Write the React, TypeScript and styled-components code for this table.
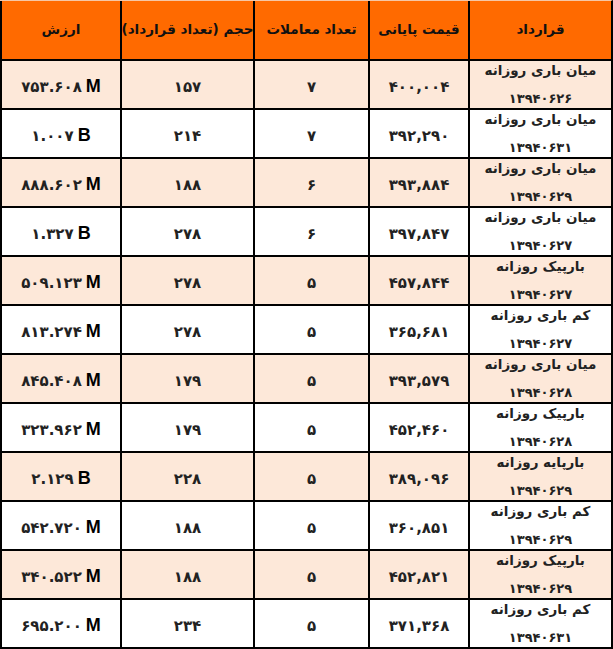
import React from "react";
import styled, { createGlobalStyle } from "styled-components";

type Row = {
  name: string;
  date: string;
  price: string;
  trades: string;
  volume: string;
  value: string;
  unit: "M" | "B";
};

const rows: Row[] = [
  { name: "میان باری روزانه", date: "۱۳۹۴۰۶۲۶", price: "۴۰۰,۰۰۴", trades: "۷", volume: "۱۵۷", value: "۷۵۳.۶۰۸", unit: "M" },
  { name: "میان باری روزانه", date: "۱۳۹۴۰۶۳۱", price: "۳۹۲,۲۹۰", trades: "۷", volume: "۲۱۴", value: "۱.۰۰۷", unit: "B" },
  { name: "میان باری روزانه", date: "۱۳۹۴۰۶۲۹", price: "۳۹۳,۸۸۴", trades: "۶", volume: "۱۸۸", value: "۸۸۸.۶۰۲", unit: "M" },
  { name: "میان باری روزانه", date: "۱۳۹۴۰۶۲۷", price: "۳۹۷,۸۴۷", trades: "۶", volume: "۲۷۸", value: "۱.۳۲۷", unit: "B" },
  { name: "بارپیک روزانه", date: "۱۳۹۴۰۶۲۷", price: "۴۵۷,۸۴۴", trades: "۵", volume: "۲۷۸", value: "۵۰۹.۱۲۳", unit: "M" },
  { name: "کم باری روزانه", date: "۱۳۹۴۰۶۲۷", price: "۳۶۵,۶۸۱", trades: "۵", volume: "۲۷۸", value: "۸۱۳.۲۷۴", unit: "M" },
  { name: "میان باری روزانه", date: "۱۳۹۴۰۶۲۸", price: "۳۹۳,۵۷۹", trades: "۵", volume: "۱۷۹", value: "۸۴۵.۴۰۸", unit: "M" },
  { name: "بارپیک روزانه", date: "۱۳۹۴۰۶۲۸", price: "۴۵۲,۴۶۰", trades: "۵", volume: "۱۷۹", value: "۳۲۳.۹۶۲", unit: "M" },
  { name: "بارپایه روزانه", date: "۱۳۹۴۰۶۲۹", price: "۳۸۹,۰۹۶", trades: "۵", volume: "۲۲۸", value: "۲.۱۲۹", unit: "B" },
  { name: "کم باری روزانه", date: "۱۳۹۴۰۶۲۹", price: "۳۶۰,۸۵۱", trades: "۵", volume: "۱۸۸", value: "۵۴۲.۷۲۰", unit: "M" },
  { name: "بارپیک روزانه", date: "۱۳۹۴۰۶۲۹", price: "۴۵۲,۸۲۱", trades: "۵", volume: "۱۸۸", value: "۳۴۰.۵۲۲", unit: "M" },
  { name: "کم باری روزانه", date: "۱۳۹۴۰۶۳۱", price: "۳۷۱,۳۶۸", trades: "۵", volume: "۲۳۴", value: "۶۹۵.۲۰۰", unit: "M" },
];

const headers = ["قرارداد", "قیمت پایانی", "تعداد معاملات", "حجم (تعداد قرارداد)", "ارزش"];

const App: React.FC = () => {
  return (
    <>
      <GlobalStyle />
      <Table>
        <HeaderRow>
          {headers.map((h) => (
            <HeadCell key={h}>{h}</HeadCell>
          ))}
        </HeaderRow>
        {rows.map((r, i) => (
          <BodyRow key={i} $shaded={i % 2 === 0}>
            <NameCell>
              <NameLine>{r.name}</NameLine>
              <DateLine>{r.date}</DateLine>
            </NameCell>
            <Cell>{r.price}</Cell>
            <Cell>{r.trades}</Cell>
            <Cell>{r.volume}</Cell>
            <Cell>
              <ValueText>
                {r.value} <Unit>{r.unit}</Unit>
              </ValueText>
            </Cell>
          </BodyRow>
        ))}
      </Table>
    </>
  );
};

export default App;

const GlobalStyle = createGlobalStyle`
  html, body {
    margin: 0;
    padding: 0;
    background: #ffffff;
  }
  body {
    font-family: "DejaVu Sans", "Noto Sans", sans-serif;
  }
`;

const Table = styled.div`
  width: 613px;
  direction: rtl;
  color: #1a1a1a;
`;

// column widths, right to left
const columns = "143px 100px 115px 133px 120px";

const HeaderRow = styled.div`
  display: grid;
  grid-template-columns: ${columns};
  height: 61px;
  box-sizing: border-box;
  background: #ff6a00;
  border-top: 1px solid #f6c7a6;
  border-right: 2px solid #000;
  border-bottom: 2px solid #000;
`;

const HeadCell = styled.div`
  display: flex;
  align-items: center;
  justify-content: center;
  border-left: 2px solid #000;
  font-size: 13.5px;
  font-weight: bold;
  color: #111;
  white-space: nowrap;
  padding-bottom: 2px;
`;

const BodyRow = styled.div<{ $shaded: boolean }>`
  display: grid;
  grid-template-columns: ${columns};
  height: 49px;
  box-sizing: border-box;
  background: ${(p) => (p.$shaded ? "#fde8d9" : "#ffffff")};
  border-right: 2px solid #000;
  border-bottom: 2px solid #000;
`;

const Cell = styled.div`
  display: flex;
  align-items: center;
  justify-content: center;
  border-left: 2px solid #000;
  font-size: 15px;
  font-weight: bold;
  color: #222;
  white-space: nowrap;
`;

const NameCell = styled(Cell)`
  flex-direction: column;
  justify-content: flex-start;
  overflow: visible;
`;

const NameLine = styled.div`
  height: 26px;
  line-height: 26px;
  margin-top: -4px;
  font-size: 13.5px;
  font-weight: bold;
  color: #222;
`;

const DateLine = styled(NameLine)`
  margin-top: 3px;
  font-size: 13px;
`;

const ValueText = styled.span`
  direction: ltr;
  display: inline-flex;
  align-items: baseline;
  gap: 4px;
`;

const Unit = styled.span`
  font-family: "Liberation Sans", Arial, sans-serif;
  font-size: 18px;
  font-weight: bold;
  color: #000;
`;
